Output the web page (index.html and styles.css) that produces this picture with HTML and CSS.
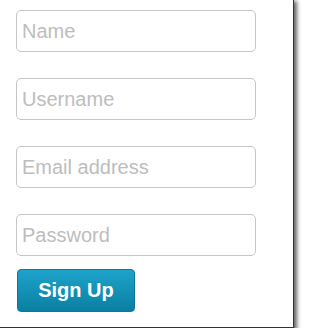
FILE: index.html
```html
<!DOCTYPE html>
<html>
<head>
<meta charset="utf-8">
<link rel="stylesheet" href="styles.css">
</head>
<body>
<div class="frame">
  <form class="form">
    <input class="field" type="text" placeholder="Name">
    <input class="field" type="text" placeholder="Username">
    <input class="field" type="text" placeholder="Email address">
    <input class="field" type="password" placeholder="Password">
    <button class="btn" type="button">Sign Up</button>
  </form>
</div>
</body>
</html>
```

FILE: styles.css
```css
html, body {
  margin: 0;
  padding: 0;
  background: #ffffff;
  overflow: hidden;
}
.frame {
  box-sizing: border-box;
  width: 294px;
  height: 328px;
  background: #ffffff;
  border-right: 1px solid #333333;
  border-bottom: 1px solid #333333;
  box-shadow: 2px 2px 4px 1px rgba(0,0,0,0.6);
  padding: 10px 0 0 16px;
}
.form {
  display: flex;
  flex-direction: column;
  align-items: flex-start;
  gap: 26px;
}
.field {
  box-sizing: border-box;
  width: 240px;
  height: 42px;
  margin: 0;
  padding: 0 5px;
  border: 1px solid #c6c6c6;
  border-radius: 5px;
  font-family: "Liberation Sans", Arial, sans-serif;
  font-size: 20px;
  color: #333;
  outline: none;
}
.field::placeholder {
  color: #bdbdbd;
}
.btn {
  box-sizing: border-box;
  margin: -13px 0 0 1px;
  width: 118px;
  height: 43px;
  border: 1px solid #0b7897;
  border-radius: 4px;
  background: linear-gradient(#1fa3cb, #0a7fa2);
  color: #ffffff;
  font-family: "Liberation Sans", Arial, sans-serif;
  font-weight: bold;
  font-size: 20px;
  padding: 0;
}
```
